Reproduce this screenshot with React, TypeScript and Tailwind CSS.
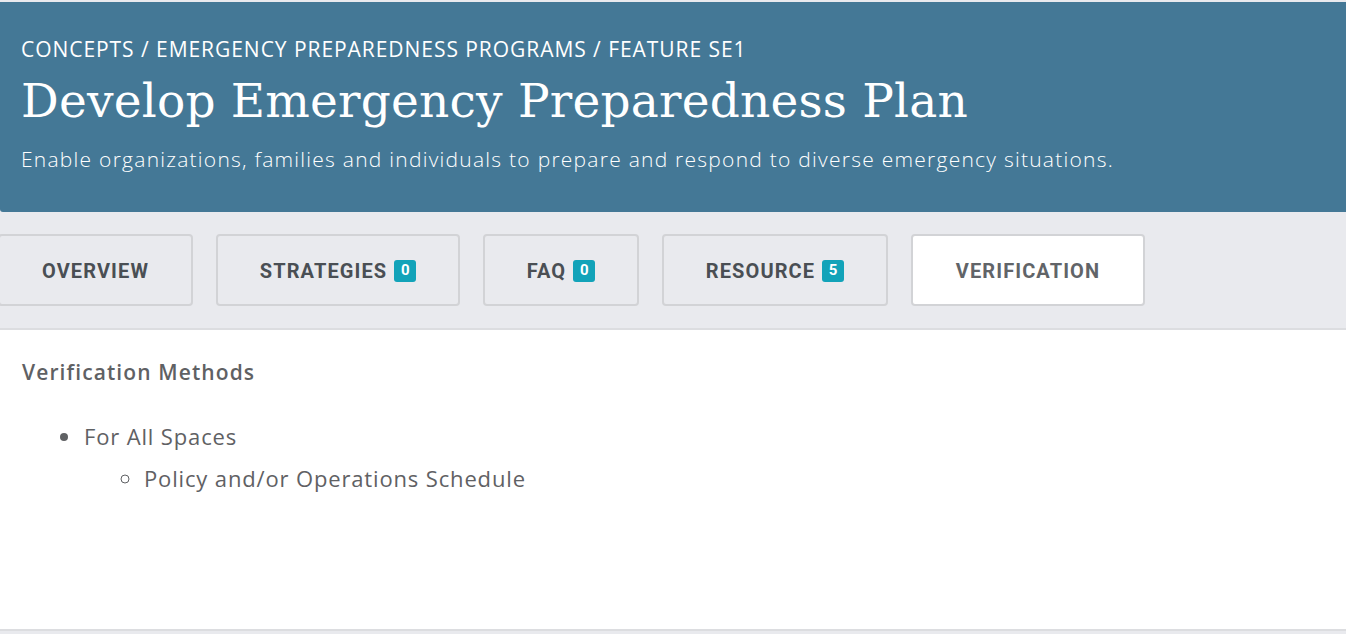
import React from 'react';

const tabs = [
  { label: 'OVERVIEW', w: 'w-[195px]' },
  { label: 'STRATEGIES', badge: '0', w: 'w-[244px]' },
  { label: 'FAQ', badge: '0', w: 'w-[156px]' },
  { label: 'RESOURCE', badge: '5', w: 'w-[226px]' },
  { label: 'VERIFICATION', w: 'w-[234px]', active: true },
];

export default function App() {
  return (
    <div className="min-h-screen bg-[#e9eaee] pt-[2px] font-['Open_Sans','Lato',sans-serif]">
      <header className="h-[210px] bg-[#447896] rounded-bl-[3px] px-[21px] pt-[34px] text-white">
        <p className="text-[21px] leading-[26px] tracking-[0.95px]">
          CONCEPTS / EMERGENCY PREPAREDNESS PROGRAMS / FEATURE SE1
        </p>
        <h1 className="mt-[11px] font-['DejaVu_Serif',serif] text-[47px] leading-[56px] tracking-[0.2px]">
          Develop Emergency Preparedness Plan
        </h1>
        <p className="mt-[17px] text-[21px] leading-[26px] font-light tracking-[1.25px]">
          Enable organizations, families and individuals to prepare and respond to diverse emergency situations.
        </p>
      </header>

      <nav className="flex gap-[23px] -ml-[2px] mt-[22px] h-[72px]">
        {tabs.map((t) => (
          <div
            key={t.label}
            className={`${t.w} flex items-center justify-center gap-[7px] rounded-[4px] border-2 border-[#d2d3d6] pt-[1px] ${
              t.active ? 'bg-white text-[#616468]' : 'bg-[#e9eaee] text-[#4a4f54]'
            } font-['Roboto',sans-serif] font-bold text-[20px] tracking-[1.1px]`}
          >
            <span>{t.label}</span>
            {t.badge && (
              <span className="flex h-[22px] w-[22px] items-center justify-center rounded-[3px] bg-[#12a3b9] text-[15px] leading-none text-white tracking-normal">
                {t.badge}
              </span>
            )}
          </div>
        ))}
      </nav>

      <section className="mt-[22px] h-[303px] border-t-2 border-b-2 border-[#dcdde0] bg-white px-[22px] pt-[27px] text-[#5f6164]">
        <h2 className="text-[21px] font-semibold leading-[30px] tracking-[1.1px]">Verification Methods</h2>
        <ul className="mt-[34px] list-disc pl-[61px] text-[22px] leading-[30px] tracking-[0.85px]">
          <li className="pl-[1px]">
            For All Spaces
            <ul className="mt-[12px] list-[circle] pl-[60px]">
              <li>Policy and/or Operations Schedule</li>
            </ul>
          </li>
        </ul>
      </section>
    </div>
  );
}
